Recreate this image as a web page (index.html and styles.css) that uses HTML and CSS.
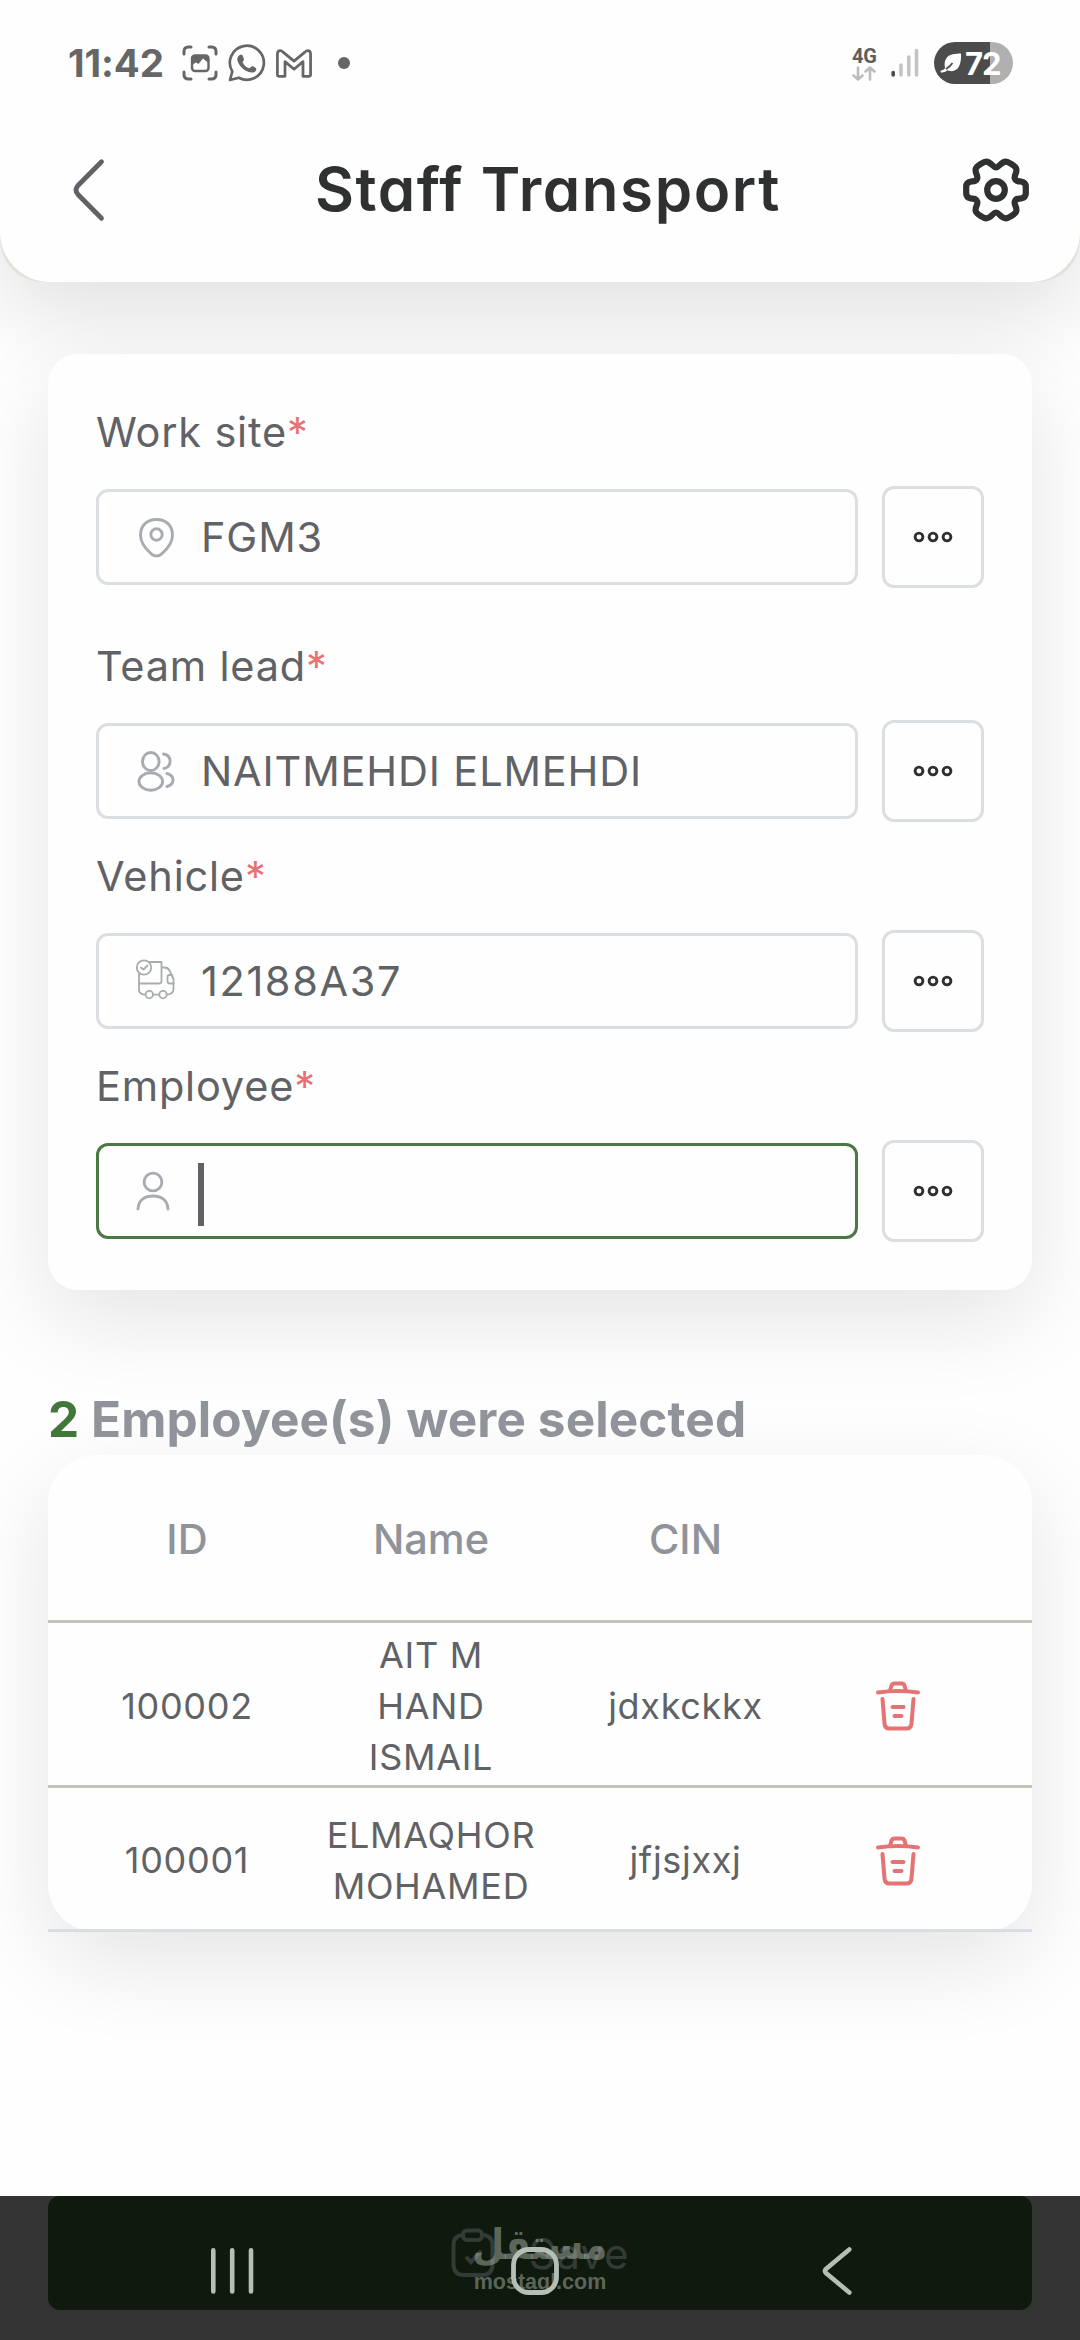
FILE: index.html
```html
<!DOCTYPE html>
<html lang="en">
<head>
<meta charset="utf-8">
<title>Staff Transport</title>
<link rel="stylesheet" href="styles.css">
</head>
<body>
<svg width="0" height="0" class="defs">
  <symbol id="dots" viewBox="0 0 40 12"><g fill="none" stroke="#2f3032" stroke-width="2.9"><circle cx="6" cy="6" r="3.9"/><circle cx="20" cy="6" r="3.9"/><circle cx="34" cy="6" r="3.9"/></g></symbol>
  <symbol id="trash" viewBox="0 0 46 50"><g fill="none" stroke="#e57373" stroke-width="4" stroke-linecap="round" stroke-linejoin="round"><path d="M3 11.5Q23 8.500 43 11.500"/><path d="M15 10L16.500 4.500Q17.200 2.500 19.500 2.500H26.500Q28.800 2.500 29.500 4.500L31 10"/><path d="M7.500 18L9.500 42.500Q10 47.500 14.500 47.500H31.500Q36 47.500 36.500 42.500L38.500 18"/><path d="M17.500 26H28.500M19.500 35H26.500"/></g></symbol>
</svg>
<div class="screen">
  <header class="top">
    <div class="top-inner">
    <div class="status">
      <div class="status-left">
        <span class="time">11:42</span>
        <svg class="ic-shot" viewBox="0 0 36 36" width="36" height="36"><g fill="none" stroke="#666" stroke-width="3" stroke-linecap="round"><path d="M2 9V6.500Q2 2 6.500 2H9M27 2H29.500Q34 2 34 6.500V9M34 27V29.500Q34 34 29.500 34H27M9 34H6.500Q2 34 2 29.500V27"/></g><rect x="10" y="10.500" width="16.500" height="15.500" rx="3" fill="#fff" stroke="#666" stroke-width="2.400"/><path d="M10 20L14 17.500L16.500 19L21 13.500L26.500 18V11H10Z" fill="#666"/></svg>
        <svg class="ic-wa" viewBox="0 0 38 38" width="38" height="38"><path d="M2 36L4.300 27.500A17 17 0 1 1 10.800 33.700Z" fill="none" stroke="#666" stroke-width="2.700" stroke-linejoin="round"/><path d="M13 10.500C15 10.500 15.500 14 16 15.500C16 17 14.500 17.500 14.700 18.500C16 21.500 18.500 23.500 21.300 24.300C22.700 23.800 23 22 24.500 22.300C26 22.800 28 23.800 28.300 24.700C28.500 27 26.500 28.800 23.500 28.600C16.500 27.800 10.500 21.500 9.300 16C9 13.500 10.500 11 13 10.500Z" fill="#666"/></svg>
        <svg class="ic-mail" viewBox="0 0 38 30" width="36" height="29"><path d="M1.500 27V5Q1.500 1.500 4.500 1.500Q6 1.500 7.500 3L19 12.500L30.500 3Q32 1.500 33.500 1.500Q36.500 1.500 36.500 5V27Q36.500 28.500 35 28.500H28.500V13L19 21L9.500 13V28.500H3Q1.500 28.500 1.500 27Z" fill="none" stroke="#666" stroke-width="2.900" stroke-linejoin="round"/></svg>
        <span class="more-dot"></span>
      </div>
      <div class="status-right">
        <div class="net"><span class="net-label">4G</span>
          <svg viewBox="0 0 24 15" width="24" height="15"><g fill="none" stroke="#bdbdbd" stroke-width="2.600" stroke-linecap="round" stroke-linejoin="round"><path d="M6 1.500V13.300M1.500 9.500L6 13.500L10.500 9.500"/><path d="M18 13.500V1.700M13.500 5.500L18 1.500L22.500 5.500"/></g></svg>
        </div>
        <svg class="signal" viewBox="0 0 28 30" width="28" height="30"><g stroke-width="3.600" stroke-linecap="round" stroke="#c4c4c4"><path d="M2.200 24.500V27" stroke="#4c4c4c"/><path d="M10 17V27M17.800 9V27M25.500 2.500V27"/></g></svg>
        <div class="battery">
          <svg viewBox="0 0 22 22" width="22" height="22"><path d="M21 1.500C21.500 9 20 17 14 18.800C11 19.600 8.500 19 7.500 18.300C5.500 20 3 20.800 1 20.400C.2 19.500.5 18.500 2 18.300C4 17.800 5 17 5 15.500C3.500 8.500 7 3.500 12.500 2.300C15.500 1.600 18.500 1.700 21 1.500Z" fill="#fff"/><path d="M6 17C9 15 11 13.500 12.500 11" stroke="#4c4c4c" stroke-width="1.700" fill="none"/></svg>
          <span>72</span>
        </div>
      </div>
    </div>
    <div class="titlebar">
      <svg class="back" viewBox="0 0 32 62" width="32" height="62"><path d="M28.500 2.800L5 26.500Q1 31 5 35.500L28.500 59.300" fill="none" stroke="#606266" stroke-width="4.800" stroke-linecap="round"/></svg>
      <h1>Staff Transport</h1>
      <svg class="gear" viewBox="0 0 66 64" width="66" height="64"><g fill="none" stroke="#2f3032" stroke-width="6.200" stroke-linejoin="round"><circle cx="33" cy="32" r="8.800"/><path d="M33 9.500C36 9.500 38 3.700 43 3.700C45 3.700 51.500 7.500 53 10C55 14.500 50.500 17.500 51.800 20.500C53 24 56 23.300 58 23.500Q62.800 24.500 62.800 28.500V35.500Q62.800 39.500 58 40.500C56 40.700 53 40 51.800 43.500C50.500 46.500 55 49.500 53 54C51.500 56.500 45 60.300 43 60.300C38 60.300 36 54.500 33 54.500C30 54.500 28 60.300 23 60.300C21 60.300 14.500 56.500 13 54C11 49.500 15.500 46.500 14.200 43.500C13 40 10 40.700 8 40.500Q3.200 39.500 3.200 35.500V28.500Q3.200 24.500 8 23.500C10 23.300 13 24 14.200 20.500C15.500 17.500 11 14.500 13 10C14.500 7.500 21 3.700 23 3.700C28 3.700 30 9.500 33 9.500Z"/></g></svg>
    </div>
    </div>
  </header>

  <main>
    <section class="form">
      <div class="field wide">
        <label>Work site<i>*</i></label>
        <div class="control">
          <div class="input"><svg viewBox="0 0 48 48" width="48" height="48"><g fill="none" stroke="#a8abb0" stroke-width="2.900"><path d="M24.500 6.500C14.500 6.500 8.500 13 8.500 22C8.500 32 16.500 38.500 20 41.500Q24.500 44.500 29 41.500C32.500 38.500 40.500 32 40.500 22C40.500 13 34.500 6.500 24.500 6.500Z"/><circle cx="24.500" cy="21.500" r="5.700"/></g></svg><span>FGM3</span></div>
          <button><svg><use href="#dots"/></svg></button>
        </div>
      </div>
      <div class="field">
        <label>Team lead<i>*</i></label>
        <div class="control">
          <div class="input"><svg viewBox="0 0 48 48" width="48" height="48"><g fill="none" stroke="#a8abb0" stroke-width="2.900" stroke-linecap="round"><ellipse cx="18.800" cy="14.500" rx="8.300" ry="9"/><ellipse cx="18.800" cy="34.500" rx="11.800" ry="8.700"/><path d="M31.500 7C36.500 8 38.500 11.500 38 15.500C37.500 19 34.500 21.500 32 21.500M35 26.500C38.500 27.500 41 30 41 33C41 36.500 38.500 38.500 35 39.500"/></g></svg><span>NAITMEHDI ELMEHDI</span></div>
          <button><svg><use href="#dots"/></svg></button>
        </div>
      </div>
      <div class="field">
        <label>Vehicle<i>*</i></label>
        <div class="control">
          <div class="input"><svg viewBox="0 0 48 48" width="48" height="48"><g fill="none" stroke="#a8abb0" stroke-width="1.800" stroke-linecap="round" stroke-linejoin="round"><circle cx="12" cy="10.500" r="7.200"/><path d="M9 10.500L11.500 12.500L15.500 8.500"/><path d="M18 5H29.500V24Q29.500 26.500 27 26.500H7M7 16V33Q7 37 12.500 37.600M21 37.600H27M35 37.600Q41.500 37 41.500 32V22L37.500 13.500Q36 10.500 32.500 10.500H30"/><path d="M40 18H37Q35.500 18 35.500 20V24Q35.500 26.500 37.500 26.500H41.500"/><circle cx="17.300" cy="37.600" r="3.700"/><circle cx="31" cy="37.600" r="3.700"/></g></svg><span class="plate">12188A37</span></div>
          <button><svg><use href="#dots"/></svg></button>
        </div>
      </div>
      <div class="field">
        <label>Employee<i>*</i></label>
        <div class="control">
          <div class="input focus"><svg viewBox="0 0 48 48" width="48" height="48"><g fill="none" stroke="#a8abb0" stroke-width="2.900" stroke-linecap="round"><circle cx="21" cy="15" r="8.900"/><path d="M6 42C6.500 32.500 13.500 29 21 29C28.500 29 35.500 32.500 36 42"/></g></svg><b class="caret"></b></div>
          <button><svg><use href="#dots"/></svg></button>
        </div>
      </div>
    </section>

    <h2><em>2</em> Employee(s) were selected</h2>
    <section class="table">
      <div class="row head"><span>ID</span><span>Name</span><span>CIN</span><span></span></div>
      <div class="row r1"><span>100002</span><span>AIT M<br>HAND<br>ISMAIL</span><span>jdxkckkx</span><span><svg><use href="#trash"/></svg></span></div>
      <div class="row r2"><span>100001</span><span>ELMAQHOR<br>MOHAMED</span><span>jfjsjxxj</span><span><svg><use href="#trash"/></svg></span></div>
    </section>
  </main>

  <footer>
    <div class="save">
      <svg viewBox="0 0 44 50" width="44" height="50"><g fill="none" stroke="#343a35" stroke-width="4" stroke-linecap="round"><rect x="12" y="2.500" width="19" height="9.500" rx="4"/><path d="M11.500 7Q2.500 8 2.500 17V36Q2.500 47 13 47H31Q41.500 47 41.500 36V17Q41.500 8 32 7"/><path d="M16 30L20 34L29 24"/></g></svg>
      <span>Save</span>
    </div>
    <div class="watermark"><span class="wm-ar" lang="ar">مستقل</span><span class="wm-en">mostaql.com</span></div>
    <nav class="nav">
      <svg class="recent" viewBox="0 0 44 48" width="44" height="48"><path d="M3.300 3.300V44.500M22.200 3.300V44.500M41 3.300V44.500" stroke="#b5bfb7" stroke-width="4.600" stroke-linecap="round"/></svg>
      <svg class="home" viewBox="0 0 48 48" width="48" height="48"><rect x="2.500" y="2.500" width="43" height="43" rx="15.500" fill="none" stroke="#b5bfb7" stroke-width="4.800"/></svg>
      <svg class="prev" viewBox="0 0 30 48" width="30" height="48"><path d="M27.300 2.500L4 22Q2 24 4 26L27.300 45.500" fill="none" stroke="#b5bfb7" stroke-width="4.600" stroke-linecap="round"/></svg>
    </nav>
  </footer>
</div>
</body>
</html>
```
FILE: styles.css
```css
* { box-sizing: border-box; margin: 0; padding: 0; }
body { width: 1080px; background: #fefefe; font-family: Inter, "Noto Sans", sans-serif; color: #606266; }
.defs { position: absolute; }
svg { display: block; flex: none; overflow: visible; }
.screen { width: 1080px; height: 2340px; display: flex; flex-direction: column; overflow: hidden; }

.top { height: 282px; flex: none; background: #e1e2db; border-radius: 0 0 43px 43px; box-shadow: 0 30px 90px rgba(0,0,0,.12); }
.top-inner { height: 282px; background: #fefefe; border-radius: 0 0 50px 50px; }
.status { height: 126px; display: flex; justify-content: space-between; padding: 0 67px 0 68px; }
.status-left, .status-right { display: flex; align-items: center; }
.time { width: 96px; font-size: 38.500px; font-weight: 700; color: #666; letter-spacing: -.1px; white-space: nowrap; }
.ic-shot { margin-left: 18px; }
.ic-wa { margin-left: 10px; }
.ic-mail { margin-left: 10px; }
.more-dot { width: 12px; height: 12px; border-radius: 50%; background: #666; margin-left: 26px; }
.net { display: flex; flex-direction: column; align-items: center; }
.net-label { font: 700 20px/22px Roboto, sans-serif; color: #5e5e5e; }
.net svg { margin-top: -1px; }
.signal { margin-left: 14px; }
.battery { width: 79px; height: 42px; margin-left: 15px; border-radius: 21px; display: flex; align-items: center; padding-left: 6px; background: linear-gradient(90deg, #4c4c4c 56px, #b0b0b0 56px); }
.battery span { font-size: 31px; font-weight: 700; color: #fff; letter-spacing: -1px; margin-left: 3px; }
.titlebar { height: 128px; display: flex; align-items: center; justify-content: space-between; padding: 0 51px 0 73px; }
h1 { font-size: 60px; line-height: 70px; font-weight: 600; color: #2f3032; font-feature-settings: "cv11"; letter-spacing: 1.600px; white-space: nowrap; margin: 0 0 3px 28px; }

main { flex: none; padding: 72px 48px 0; height: 1914px; }
.form { height: 936px; background: #fefefe; border-radius: 30px; padding: 48px; box-shadow: 0 30px 90px rgba(0,0,0,.1); display: flex; flex-direction: column; }
.field { height: 210px; flex: none; }
.field.wide { height: 234px; }
.field label { display: block; height: 84px; line-height: 60px; font-size: 41.500px; letter-spacing: .8px; white-space: nowrap; }
.field i { font-style: normal; color: #e57373; }
.control { display: flex; justify-content: space-between; align-items: center; }
.input { width: 762px; height: 96px; border: 3px solid #dcdfe2; border-radius: 12px; display: flex; align-items: center; padding-left: 33px; font-size: 41.500px; letter-spacing: .85px; }
.input span { margin-left: 21px; white-space: nowrap; }
.input .plate { letter-spacing: 1.600px; }
.input.focus { border-color: #4b7845; }
.caret { width: 6px; height: 63px; background: #606266; margin: 6px 0 0 18px; }
.control button { width: 102px; height: 102px; border: 3px solid #dcdfe2; border-radius: 12px; background: none; display: flex; align-items: center; justify-content: center; }
.control button svg { width: 40px; height: 12px; }

h2 { margin-top: 99px; height: 66px; line-height: 61px; font-size: 49.500px; font-weight: 700; color: #909399; letter-spacing: .1px; white-space: nowrap; }
h2 em { font-style: normal; color: #42773a; }
.table { background: #fefefe; border-radius: 48px; height: 477px; box-shadow: 0 30px 90px rgba(0,0,0,.1); }
.row { display: grid; grid-template-columns: 278px 210px 299px 125px; align-items: center; text-align: center; border-bottom: 3px solid #c4c4bb; padding-top: 4px; font-size: 36px; line-height: 51px; letter-spacing: .7px; }
.row.head { height: 168px; font-size: 41.500px; font-weight: 500; color: #909399; letter-spacing: 0; }
.row.r1 { height: 165px; }
.row.r2 { height: 144px; border-color: #dadce3; }
.row svg { width: 46px; height: 50px; margin: 0 auto; }

footer { height: 144px; flex: none; background: #333; padding: 0 48px; position: relative; }
.save { height: 114px; background: #0f190d; border-radius: 12px; display: flex; align-items: center; justify-content: center; gap: 34px; font-size: 42px; letter-spacing: .8px; color: #343a35; }
.watermark { position: absolute; left: 474px; top: 22px; width: 132px; display: flex; flex-direction: column; align-items: center; color: rgba(190,200,190,.45); }
.wm-ar { font: 700 42px/54px "DejaVu Sans", sans-serif; white-space: nowrap; transform: scaleX(.88); }
.wm-en { font: 700 21.500px/20px "Liberation Sans", sans-serif; }
.nav { position: absolute; left: 210px; right: 228px; top: 51px; display: flex; justify-content: space-between; }
.home { margin-left: -7px; }
```
